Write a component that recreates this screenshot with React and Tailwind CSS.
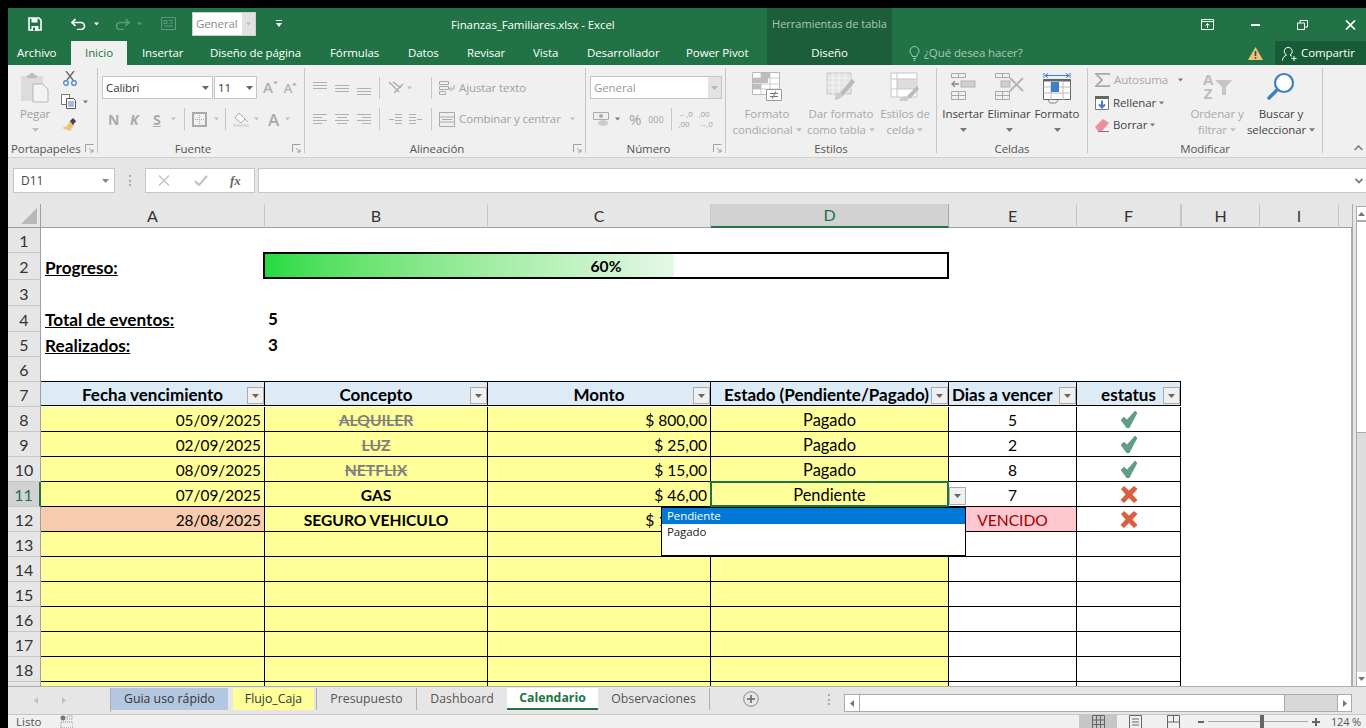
import React from "react";

const UI = "font-['Open_Sans','Noto_Sans',sans-serif]";
const SHEET = "font-['Lato','Liberation_Sans',sans-serif]";

// triangulito de los desplegables
const Caret = ({ className = "text-[#9a9a9a]", w = 7 }) => (
  <svg width={w} height="4" viewBox="0 0 7 4" className={`shrink-0 ${className}`}>
    <path d="M0 0h7L3.5 4z" fill="currentColor" />
  </svg>
);

const Sep = ({ className = "" }) => <div className={`w-px h-[22px] bg-[#c6c6c6] shrink-0 ${className}`} />;

const Lines = ({ rows, w = 14 }) => (
  <svg width={w} height="14" viewBox="0 0 14 14" className="shrink-0 text-[#b0b0b0]">
    {rows.map((r, i) => (
      <rect key={i} x={r[0]} y={r[1]} width={r[2]} height="1" fill="currentColor" />
    ))}
  </svg>
);

const GridBig = ({ children, w = 30, h = 30, view = "0 0 30 30" }) => (
  <svg width={w} height={h} viewBox={view} className="shrink-0">
    {children}
  </svg>
);

function BigButton({ icon, l1, l2, caret, w, disabled = true, caretBelow }) {
  const color = disabled ? "text-[#a8a8a8]" : "text-[#444]";
  return (
    <div className={`flex flex-col items-center shrink-0 ${w}`}>
      <div className="h-[34px] flex items-start justify-center">{icon}</div>
      <div className={`leading-[16px] whitespace-nowrap ${color}`}>{l1}</div>
      {caretBelow ? (
        <div className="h-[16px] flex items-center"><Caret className="text-[#777]" /></div>
      ) : (
        <div className={`flex items-center gap-[3px] leading-[16px] whitespace-nowrap ${color}`}>
          {l2}
          {caret && <Caret className={disabled ? "text-[#c0c0c0]" : "text-[#777]"} w={6} />}
        </div>
      )}
    </div>
  );
}

function Launcher() {
  return (
    <svg width="9" height="9" viewBox="0 0 9 9" className="absolute right-[4px] bottom-[4px] text-[#a0a0a0]">
      <path d="M0.5 8V0.5H8.5M4 4l4 4M8 5v3H5" fill="none" stroke="currentColor" />
    </svg>
  );
}

function Group({ label, w, launcher, children, labelClass = "justify-center" }) {
  return (
    <div className={`relative flex flex-col shrink-0 h-full ${w}`}>
      <div className="flex-1 min-h-0 border-r border-[#c6c6c6] mt-[3px] mb-[4px] flex flex-col">
        <div className="flex-1 min-h-0">{children}</div>
        <div className={`h-[18px] -mb-[4px] pt-[1px] flex items-center text-[#555] ${labelClass}`}>{label}</div>
      </div>
      {launcher && <Launcher />}
    </div>
  );
}

const SelectBox = ({ text, w, muted, arrowBg }) => (
  <div className={`h-[23px] ${w} bg-white border border-[#c6c6c6] flex items-center pl-[3px] ${muted ? "text-[#9a9a9a]" : "text-[#333]"}`}>
    <span className="flex-1">{text}</span>
    <span className={`w-[13px] h-full flex items-center justify-center ${arrowBg ? "bg-[#e3e3e3]" : ""}`}>
      <Caret className={muted ? "text-[#b5b5b5]" : "text-[#666]"} />
    </span>
  </div>
);

function QuickAccess() {
  return (
    <div className="h-[33px] pb-[2px] flex items-center">
      <svg width="14" height="14" viewBox="0 0 14 14" className="ml-[20px] shrink-0">
        <path d="M1 1h10l2 2v10H1z" fill="none" stroke="#fff" strokeWidth="1.6" />
        <path d="M3.5 1.5h6v4h-6zM3.5 9h7v4.5h-7z" fill="#fff" />
        <rect x="5" y="10.5" width="2" height="3" fill="#217346" />
      </svg>
      <svg width="16" height="12" viewBox="0 0 16 12" className="ml-[29px] shrink-0">
        <path d="M1 4.500h9a3.500 3.500 0 0 1 0 7H6M4.500 1L1 4.500 4.500 8" fill="none" stroke="#fff" strokeWidth="1.700" />
      </svg>
      <Caret className="text-white ml-[7px]" w={5} />
      <svg width="15" height="12" viewBox="0 0 15 12" className="ml-[16px] shrink-0">
        <path d="M14 4.500H5a3.500 3.500 0 0 0 0 7h4M10.500 1L14 4.500 10.500 8" fill="none" stroke="#5c9a78" strokeWidth="1.700" />
      </svg>
      <Caret className="text-[#5c9a78] ml-[7px]" w={5} />
      <svg width="15" height="13" viewBox="0 0 15 13" className="ml-[19px] shrink-0">
        <path d="M.5.5h14v12H.5zM3 3.500h3v3H3zM8 3.500h4M8 6h4M3 9h9" fill="none" stroke="#5c9a78" />
      </svg>
      <div className="ml-[16px] w-[64px] h-[24px] bg-white border border-[#c5d5cb] flex items-center text-[#8a8a8a] shrink-0">
        <span className="flex-1 pl-[3px]">General</span>
        <span className="w-[13px] h-full bg-[#e2e2e2] flex items-center justify-center"><Caret className="text-[#bbb]" w={5} /></span>
      </div>
      <svg width="6" height="7" viewBox="0 0 6 7" className="ml-[20px] shrink-0">
        <path d="M0 0h6v1H0zM0 3h6L3 7z" fill="#fff" />
      </svg>
    </div>
  );
}

const TABS = [
  ["Insertar", "w-[39px] ml-[15px]"],
  ["Diseño de página", "w-[91px] ml-[29px]"],
  ["Fórmulas", "w-[49px] ml-[29px]"],
  ["Datos", "w-[30px] ml-[29px]"],
  ["Revisar", "w-[37px] ml-[29px]"],
  ["Vista", "w-[25px] ml-[29px]"],
  ["Desarrollador", "w-[70px] ml-[29px]"],
  ["Power Pivot", "w-[63px] ml-[29px]"],
];

function TitleBar() {
  return (
    <div className={`h-[57px] bg-[#217346] flex text-white text-[11.5px] tracking-[-0.1px] shrink-0 ${UI}`}>
      <div className="w-[759px] shrink-0 flex flex-col">
        <div className="relative">
          <QuickAccess />
          <div className="absolute left-[443px] top-[9px] text-white leading-[16px]">Finanzas_Familiares.xlsx - Excel</div>
        </div>
        <div className="h-[24px] flex items-end">
          <div className="ml-[9px] w-[54px] shrink-0 h-full flex items-center">Archivo</div>
          <div className="w-[56px] shrink-0 h-full bg-[#f0f0f0] text-[#217346] flex items-center justify-center">Inicio</div>
          {TABS.map(([t, m]) => (
            <div key={t} className={`h-full shrink-0 flex items-center whitespace-nowrap ${m}`}>{t}</div>
          ))}
        </div>
      </div>
      <div className="w-[125px] shrink-0 bg-[#1c5e39] flex flex-col items-center">
        <div className="h-[33px] flex items-center text-[11px] tracking-normal text-[#a7c9b5] whitespace-nowrap">Herramientas de tabla</div>
        <div className="h-[24px] flex items-center">Diseño</div>
      </div>
      <div className="w-[474px] shrink-0 flex flex-col">
        <div className="h-[33px] flex items-center justify-end">
          <svg width="13" height="11" viewBox="0 0 13 11" className="mr-[37px]">
            <path d="M.5.5h12v10H.5zM.5 2.500h12M6.500 9V4.500M4.500 6.500l2-2 2 2" fill="none" stroke="#fff" />
          </svg>
          <div className="w-[9px] h-[2px] bg-white mr-[37px]" />
          <svg width="11" height="10" viewBox="0 0 11 10" className="mr-[37px]">
            <path d="M.5 3h7v6.500h-7zM3 3V.5h7.500V7H8" fill="none" stroke="#fff" strokeWidth="1" />
          </svg>
          <svg width="11" height="10" viewBox="0 0 11 10" className="mr-[10px]">
            <path d="M1 .5l9 9M10 .5l-9 9" stroke="#fff" strokeWidth="1.700" />
          </svg>
        </div>
        <div className="h-[24px] flex items-center">
          <svg width="11" height="15" viewBox="0 0 11 15" className="ml-[17px] shrink-0">
            <path d="M3.500 10.500C3 8 1 7.500 1 5a4.500 4.500 0 0 1 9 0c0 2.500-2 3-2.500 5.500zM4 12.500h3M4.500 14.300h2" fill="none" stroke="#a7c9b5" />
          </svg>
          <span className="ml-[4px] w-[97px] shrink-0 text-[#a7c9b5] whitespace-nowrap">¿Qué desea hacer?</span>
          <svg width="15" height="13" viewBox="0 0 15 13" className="ml-[227px] shrink-0">
            <path d="M7.500 0L15 13H0z" fill="#eec17b" />
            <rect x="6.700" y="4" width="1.600" height="5" fill="#444" />
            <rect x="6.700" y="10" width="1.600" height="1.600" fill="#444" />
          </svg>
          <div className="ml-[12px] flex-1 h-full bg-[#185c37] flex items-center pl-[7px]">
            <svg width="15" height="15" viewBox="0 0 15 15" className="shrink-0">
              <path d="M.5 14.500c0-3 2-4.500 4-5.500a4 4 0 1 1 3.500 0c1 .5 1.500 1 2 1.500M9.500 12.500h5M12 10v5" fill="none" stroke="#fff" />
            </svg>
            <span className="ml-[4px]">Compartir</span>
          </div>
        </div>
      </div>
    </div>
  );
}

function Clipboard() {
  return (
    <div className="flex pt-[3px]">
      <div className="w-[50px] ml-[2px] flex flex-col items-center">
        <svg width="30" height="31" viewBox="0 0 30 31" className="mt-[1px]">
          <path d="M1 4h22v25H1z" fill="#dcdcdc" />
          <path d="M7 3h3V1h4v2h3v3H7z" fill="#bdbdbd" />
          <path d="M13 12h10l5 5v13H13z" fill="#f3f3f3" stroke="#b5b5b5" />
        </svg>
        <span className="leading-[16px] text-[#a0a0a0] mt-[3px]">Pegar</span>
        <Caret className="text-[#c0c0c0] mt-[6px]" />
      </div>
      <div className="flex flex-col ml-[1px]">
        <svg width="16" height="15" viewBox="0 0 16 15" className="ml-[1px]">
          <path d="M4 0l7 9M12 0L5 9" stroke="#666" strokeWidth="1.300" />
          <circle cx="4" cy="12" r="2.300" fill="none" stroke="#3f7fc4" strokeWidth="1.200" />
          <circle cx="12" cy="12" r="2.300" fill="none" stroke="#3f7fc4" strokeWidth="1.200" />
        </svg>
        <div className="flex items-center mt-[8px]">
          <svg width="16" height="15" viewBox="0 0 16 15">
            <path d="M.5.5h8v10h-8z" fill="#fff" stroke="#777" />
            <path d="M5.500 4.500h7l2 2v8h-9z" fill="#fff" stroke="#555" />
            <path d="M7 8h6M7 10h6M7 12h6" stroke="#3f7fc4" />
          </svg>
          <Caret className="text-[#777] ml-[6px]" w={5} />
        </div>
        <svg width="16" height="15" viewBox="0 0 16 15" className="mt-[8px]">
          <path d="M9 4l4 4-4 6-8-3 5-2z" fill="#f1c279" />
          <path d="M9 4l3-3 3 3-3 4z" fill="#444" />
        </svg>
      </div>
    </div>
  );
}

function FontGroup() {
  return (
    <div className="flex flex-col pl-[4px] pt-[8px]">
      <div className="flex items-center">
        <SelectBox text="Calibri" w="w-[111px]" />
        <SelectBox text="11" w="w-[43px] ml-px" />
        <span className="ml-[6px] flex items-start text-[15px] leading-none text-[#b0b0b0] font-semibold">A<Caret className="text-[#b0b0b0] mt-[1px]" w={5} /></span>
        <span className="ml-[6px] flex items-start text-[13px] leading-none text-[#b0b0b0] font-semibold mt-[2px]">A<Caret className="text-[#b0b0b0] rotate-180" w={5} /></span>
      </div>
      <div className="flex items-center mt-[9px] h-[22px] text-[#aaa] text-[14px]">
        <span className="ml-[6px] w-[22px] font-bold">N</span>
        <span className="w-[23px] font-bold italic">K</span>
        <span className="w-[18px] font-bold underline">S</span>
        <Caret className="text-[#c0c0c0]" w={5} />
        <Sep className="ml-[8px]" />
        <svg width="15" height="15" viewBox="0 0 15 15" className="ml-[7px]">
          <path d="M1 1h13v13H1z" fill="none" stroke="#aaa" strokeWidth="2" />
          <path d="M7.500 3v9M3 7.500h9" stroke="#aaa" strokeDasharray="1 1" />
        </svg>
        <Caret className="text-[#c0c0c0] ml-[7px]" w={5} />
        <Sep className="ml-[6px]" />
        <svg width="17" height="15" viewBox="0 0 17 15" className="ml-[7px]">
          <path d="M6 1l6 6-4 4-6-5z" fill="#fff" stroke="#aaa" />
          <path d="M12 7l3 3" stroke="#aaa" />
          <rect x="0" y="12" width="16" height="3" fill="#ddd" />
        </svg>
        <Caret className="text-[#c0c0c0] ml-[4px]" w={5} />
        <span className="ml-[9px] text-[17px] leading-none font-semibold text-[#aaa]">A</span>
        <Caret className="text-[#c0c0c0] ml-[6px]" w={5} />
      </div>
    </div>
  );
}

const ALIGN = {
  top: [[0, 1, 14], [0, 4, 14], [0, 7, 14]],
  mid: [[0, 4, 14], [0, 7, 14], [0, 10, 14]],
  bot: [[0, 7, 14], [0, 10, 14], [0, 13, 14]],
  left: [[0, 2, 14], [0, 5, 9], [0, 8, 14], [0, 11, 9]],
  center: [[0, 2, 14], [2, 5, 10], [0, 8, 14], [2, 11, 10]],
  right: [[0, 2, 14], [5, 5, 9], [0, 8, 14], [5, 11, 9]],
};

function AlignGroup() {
  return (
    <div className="flex flex-col pl-[8px] pt-[8px] text-[#a0a0a0]">
      <div className="flex items-center h-[23px]">
        <Lines rows={ALIGN.top} />
        <div className="ml-[8px]"><Lines rows={ALIGN.mid} /></div>
        <div className="ml-[8px]"><Lines rows={ALIGN.bot} /></div>
        <Sep className="ml-[8px]" />
        <svg width="18" height="16" viewBox="0 0 18 16" className="ml-[7px]">
          <path d="M2 2l10 10M6 2l8 6M16 4l-9 9" fill="none" stroke="#aaa" strokeWidth="1.300" />
        </svg>
        <Caret className="text-[#c0c0c0] ml-[2px]" w={5} />
        <Sep className="ml-[19px]" />
        <svg width="16" height="14" viewBox="0 0 16 14" className="ml-[7px]">
          <path d="M.5.5h9v3h-9zM.5 5.500h9v3h-9zM.5 10.500h6v3h-6zM15 4v4h-4M12.500 6l-2 2 2 2" fill="none" stroke="#aaa" />
        </svg>
        <span className="ml-[4px] whitespace-nowrap">Ajustar texto</span>
      </div>
      <div className="flex items-center h-[22px] mt-[9px]">
        <Lines rows={ALIGN.left} />
        <div className="ml-[8px]"><Lines rows={ALIGN.center} /></div>
        <div className="ml-[8px]"><Lines rows={ALIGN.right} /></div>
        <Sep className="ml-[8px]" />
        <div className="ml-[7px]"><Lines rows={[[7, 2, 7], [7, 5, 7], [7, 8, 7], [7, 11, 7], [1, 7, 5]]} w={16} /></div>
        <div className="ml-[5px]"><Lines rows={[[0, 2, 7], [0, 5, 7], [0, 8, 7], [0, 11, 7], [8, 7, 5]]} w={16} /></div>
        <Sep className="ml-[7px]" />
        <svg width="16" height="15" viewBox="0 0 16 15" className="ml-[7px]">
          <path d="M.5.5h15v14H.5zM.5 5h15M.5 10h15M3 7.500h10" fill="none" stroke="#aaa" />
        </svg>
        <span className="ml-[4px] w-[102px] shrink-0 whitespace-nowrap">Combinar y centrar</span>
        <Caret className="text-[#c0c0c0] ml-[9px]" w={5} />
      </div>
    </div>
  );
}

function NumberGroup() {
  return (
    <div className="flex flex-col pl-[4px] pt-[8px] text-[#a0a0a0]">
      <SelectBox text="General" w="w-[132px]" muted arrowBg />
      <div className="flex items-center h-[22px] mt-[9px]">
        <svg width="17" height="15" viewBox="0 0 17 15" className="ml-[3px]">
          <path d="M.5.5h15v7H.5z" fill="none" stroke="#aaa" />
          <circle cx="8" cy="4" r="2" fill="#aaa" />
          <ellipse cx="10" cy="11" rx="5" ry="3" fill="#ccc" />
        </svg>
        <Caret className="text-[#777] ml-[5px]" w={5} />
        <span className="ml-[9px] text-[15px] leading-none">%</span>
        <span className="ml-[7px] text-[9px] leading-none">000</span>
        <Sep className="ml-[8px]" />
        <span className="ml-[6px] text-[8px] leading-[10px] w-[15px] whitespace-nowrap">←,0<br />,00</span>
        <span className="ml-[5px] text-[8px] leading-[10px] w-[15px] whitespace-nowrap">,00<br />→,0</span>
      </div>
    </div>
  );
}

const IconFormatoCond = (
  <GridBig>
    <path d="M.5.5h27v22H.5z" fill="#fff" stroke="#b8b8b8" />
    <path d="M9 .5v22M18 .5v22M.5 6h27M.5 12h27M.5 17h27" stroke="#ccc" />
    <path d="M9 1h9v5H9zM1 6h15v5H1zM1 12h8v5H1z" fill="#bdbdbd" />
    <path d="M14.500 17.500h15v11h-15z" fill="#fff" stroke="#999" />
    <path d="M18 21.500h8M18 24.500h8M24 19l-4 8" stroke="#777" />
  </GridBig>
);

const IconTabla = (
  <GridBig>
    <path d="M1 1h24v21H1z" fill="#e4e4e4" stroke="#c6c6c6" />
    <path d="M7 1v21M13 1v21M19 1v21M1 6h24M1 11h24M1 16h24" stroke="#f4f4f4" />
    <path d="M26 7L13 22l3 3L29 10z" fill="#bbb" />
    <path d="M9 23c2-3 6-3 7-1s-1 6-8 6c2-1 1-3 1-5z" fill="#ccc" />
  </GridBig>
);

const IconEstilos = (
  <GridBig>
    <path d="M1 1h26v24H1z" fill="#fff" stroke="#c6c6c6" />
    <path d="M7 7h20v10H7z" fill="#ddd" />
    <path d="M1 7h26M1 17h26M7 1v24" stroke="#c6c6c6" />
    <path d="M27 14L17 24l3 3 9-10z" fill="#bbb" />
    <path d="M9 29c1-4 8-6 10-3l-2 3z" fill="#ccc" />
  </GridBig>
);

const IconInsertar = (
  <GridBig w={26} h={28} view="0 0 26 28">
    <path d="M1.500 1.500h14v4h-14zM1.500 5.500h14M8.500 1.500v4M1.500 19.500h14v8h-14zM1.500 23.500h14M8.500 19.500v8" fill="none" stroke="#aaa" />
    <rect x="11" y="9" width="14" height="6" fill="#d0d0d0" stroke="#b5b5b5" />
    <path d="M9 12H2M5 9l-3 3 3 3" fill="none" stroke="#888" strokeWidth="1.300" />
  </GridBig>
);

const IconEliminar = (
  <GridBig w={30} h={28} view="0 0 30 28">
    <path d="M1.500 1.500h14v4h-14zM1.500 5.500h14M8.500 1.500v4M1.500 19.500h14v8h-14zM1.500 23.500h14M8.500 19.500v8" fill="none" stroke="#aaa" />
    <rect x="7" y="9" width="9" height="6" fill="#d0d0d0" stroke="#b5b5b5" />
    <path d="M16 6l13 13M29 6L16 19" stroke="#b5b5b5" strokeWidth="2" />
  </GridBig>
);

const IconFormato = (
  <GridBig w={30} h={32} view="0 0 30 32">
    <path d="M2 1v5M28 1v5M3 3.500h24M6 1.500L3 3.500l3 2M24 1.500l3 2-3 2" fill="none" stroke="#3f7fc4" />
    <path d="M1.500 7.500h27v20h-27z" fill="#fff" stroke="#666" />
    <path d="M1.500 7.500h27v2h-27z" fill="#666" />
    <path d="M9 9v19M21 9v19M1.500 15h27M1.500 21h27" stroke="#bbb" />
    <rect x="9" y="10" width="8" height="10" fill="#3f7fc4" />
    <path d="M6 28l2 3h6l2-3" fill="none" stroke="#888" />
  </GridBig>
);

// el icono de ordenar lleva letras de verdad, no trazos
const IconOrdenar = (
  <div className="flex items-start w-[30px] h-[28px]">
    <div className="w-[12px] flex flex-col items-center text-[15px] leading-[14px] font-bold text-[#bdbdbd]">
      <span>A</span>
      <span>Z</span>
    </div>
    <svg width="17" height="16" viewBox="0 0 17 16" className="mt-[8px] ml-[1px] shrink-0">
      <path d="M0 0h17l-6 7v8H7V7z" fill="#c6c6c6" />
    </svg>
  </div>
);

function EditGroup() {
  return (
    <div className="flex pt-[4px] pl-[7px]">
      <div className="w-[87px] flex flex-col shrink-0">
        <div className="flex items-center h-[16px] text-[#a8a8a8]">
          <svg width="15" height="14" viewBox="0 0 15 14" className="shrink-0">
            <path d="M15 2.500V.8H1L7 7l-6 6.200h14v-1.700" fill="none" stroke="#aaa" strokeWidth="1.800" />
          </svg>
          <span className="ml-[4px] w-[55px] shrink-0">Autosuma</span>
          <Caret className="text-[#777] ml-[9px]" w={5} />
        </div>
        <div className="flex items-center h-[16px] mt-[7px] text-[#444]">
          <svg width="14" height="14" viewBox="0 0 14 14" className="shrink-0">
            <path d="M.5.5h13v13H.5z" fill="#fff" stroke="#777" />
            <rect x="0" y="0" width="14" height="3" fill="#666" />
            <path d="M7 4.500v7M4 8.500l3 3 3-3" fill="none" stroke="#3f7fc4" strokeWidth="2" />
          </svg>
          <span className="ml-[4px]">Rellenar</span>
          <Caret className="text-[#777] ml-[3px]" w={5} />
        </div>
        <div className="flex items-center h-[16px] mt-[6px] text-[#444]">
          <svg width="15" height="14" viewBox="0 0 15 14" className="shrink-0">
            <path d="M0 9l8-8 6 4-7 8H3z" fill="#ee8d9b" />
            <path d="M3 13.500h11" stroke="#777" />
          </svg>
          <span className="ml-[3px]">Borrar</span>
          <Caret className="text-[#777] ml-[3px]" w={5} />
        </div>
      </div>
      <BigButton w="w-[70px]" l1="Ordenar y" l2="filtrar" caret icon={IconOrdenar} />
      <BigButton
        w="w-[58px]"
        l1="Buscar y"
        l2="seleccionar"
        caret
        disabled={false}
        icon={
          <GridBig w={28} h={30} view="0 0 28 30">
            <circle cx="17" cy="11" r="9" fill="#fff" stroke="#3f7fc4" strokeWidth="2.200" />
            <path d="M10 18l-8 8" stroke="#3f7fc4" strokeWidth="3.500" strokeLinecap="round" />
          </GridBig>
        }
      />
    </div>
  );
}

function Ribbon() {
  return (
    <div className={`h-[93px] bg-[#f0f0f0] border-b border-[#d0d0d0] flex shrink-0 relative text-[11.5px] tracking-[-0.1px] ${UI}`}>
      <Group label="Portapapeles" w="w-[90px]" launcher labelClass="justify-start pl-[3px]"><Clipboard /></Group>
      <Group label="Fuente" w="w-[207px]" launcher labelClass="justify-center pr-[16px]"><FontGroup /></Group>
      <Group label="Alineación" w="w-[281px]" launcher labelClass="justify-center pr-[16px]"><AlignGroup /></Group>
      <Group label="Número" w="w-[140px]" launcher labelClass="justify-center pr-[14px]"><NumberGroup /></Group>
      <Group label="Estilos" w="w-[211px]">
        <div className="flex pt-[4px] pl-[6px]">
          <BigButton w="w-[70px]" l1="Formato" l2="condicional" caret icon={IconFormatoCond} />
          <BigButton w="w-[78px]" l1="Dar formato" l2="como tabla" caret icon={IconTabla} />
          <BigButton w="w-[50px]" l1="Estilos de" l2="celda" caret icon={IconEstilos} />
        </div>
      </Group>
      <Group label="Celdas" w="w-[151px]">
        <div className="flex pt-[4px] pl-[3px]">
          <BigButton w="w-[46px]" l1="Insertar" caretBelow disabled={false} icon={IconInsertar} />
          <BigButton w="w-[46px]" l1="Eliminar" caretBelow disabled={false} icon={IconEliminar} />
          <BigButton w="w-[50px]" l1="Formato" caretBelow disabled={false} icon={IconFormato} />
        </div>
      </Group>
      <Group label="Modificar" w="w-[235px]"><EditGroup /></Group>
      <svg width="9" height="6" viewBox="0 0 9 6" className="absolute right-[3px] bottom-[6px]">
        <path d="M.5 5l4-4 4 4" fill="none" stroke="#777" strokeWidth="1.500" />
      </svg>
    </div>
  );
}

function FormulaBar() {
  return (
    <div className={`h-[46px] bg-[#e6e6e6] flex items-start pt-[10px] shrink-0 ${UI}`}>
      <div className="ml-[5px] w-[102px] h-[25px] bg-white border border-[#c6c6c6] flex items-center pl-[7px] pr-[5px] text-[12px] text-[#444]">
        <span className="flex-1">D11</span>
        <Caret className="text-[#888]" />
      </div>
      <div className="w-[30px] h-[25px] flex items-center justify-center">
        <div className="w-[2px] h-[11px] border-l-2 border-dotted border-[#aaa]" />
      </div>
      <div className="w-[110px] h-[25px] bg-white border border-[#c6c6c6] flex items-center text-[#b5b5b5]">
        <svg width="12" height="11" viewBox="0 0 12 11" className="ml-[12px]">
          <path d="M1 .5l10 10M11 .5l-10 10" stroke="#c0c0c0" strokeWidth="1.300" />
        </svg>
        <svg width="14" height="11" viewBox="0 0 14 11" className="ml-[24px]">
          <path d="M1 6l4 4 8-9" fill="none" stroke="#c0c0c0" strokeWidth="2" />
        </svg>
        <span className="ml-[22px] font-['Liberation_Serif',serif] italic font-bold text-[13px] text-[#666]">fx</span>
      </div>
      <div className="ml-[3px] flex-1 h-[25px] bg-white border border-[#c6c6c6] border-r-0 flex items-center justify-end pr-[3px]">
        <svg width="8" height="6" viewBox="0 0 8 6">
          <path d="M.5.8L4 4.500 7.500.8" fill="none" stroke="#777" strokeWidth="1.800" />
        </svg>
      </div>
    </div>
  );
}

const COLS = [
  ["A", "w-[224px]"],
  ["B", "w-[223px]"],
  ["C", "w-[223px]"],
  ["D", "w-[238px]"],
  ["E", "w-[128px]"],
  ["F", "w-[104px]"],
];
const W = Object.fromEntries(COLS);

function ColumnHeaders() {
  return (
    <div className={`h-[24px] bg-[#e6e6e6] flex shrink-0 text-[16px] text-[#333] ${SHEET}`}>
      <div className="w-[33px] border-r border-b border-[#9f9f9f] relative">
        <svg width="16" height="16" viewBox="0 0 16 16" className="absolute right-[3px] bottom-[3px]">
          <path d="M16 0v16H0z" fill="#b9b9b9" />
        </svg>
      </div>
      {COLS.map(([c, w]) => (
        <div
          key={c}
          className={`${w} flex items-center justify-center border-b border-r ${
            c === "D" ? "bg-[#d2d2d2] text-[#217346] border-b-[#217346] border-b-2 border-r-[#ababab]" : "border-b-[#9f9f9f] border-r-[#c6c6c6]"
          }`}
        >
          {c}
        </div>
      ))}
      <div className="w-[1px] border-r border-b border-b-[#9f9f9f] border-r-[#c6c6c6]" />
      <div className="w-[78px] flex items-center justify-center border-b border-r border-b-[#9f9f9f] border-r-[#c6c6c6]">H</div>
      <div className="w-[79px] flex items-center justify-center border-b border-r border-b-[#9f9f9f] border-r-[#c6c6c6]">I</div>
      <div className="w-[14px] border-b border-r border-b-[#9f9f9f] border-r-[#ababab]" />
      <div className="ml-[3px] mt-[2px] flex-1 bg-white border-l border-t border-[#ababab]">
        <div className="h-[15px] border-b-2 border-[#ababab] flex items-center justify-center">
          <Caret className="text-[#777] rotate-180" />
        </div>
      </div>
    </div>
  );
}

const FilterBtn = () => (
  <div className="absolute right-0 bottom-[1px] w-[17px] h-[17px] bg-[#f0f0f0] border border-[#ababab] flex items-center justify-center">
    <Caret className="text-[#666]" />
  </div>
);

const Check = () => (
  <svg width="18" height="17" viewBox="0 0 18 17" className="-mt-[2px]">
    <path d="M1 9l3-3 3 3 8-9 2 2-8 15H7z" fill="#5f9e87" stroke="#437a65" strokeWidth=".5" />
  </svg>
);

const Cross = () => (
  <svg width="18" height="17" viewBox="0 0 18 17" className="-mt-[2px]">
    <path d="M1 3l3-3 5 4.500L14 0l3.500 3-5 5.500 5 5.500-3.500 3-5-5-5 5-3.500-3 5-5.500z" fill="#d95f3f" />
  </svg>
);

function Cell({ col, bg = "", className = "", children, top }) {
  return (
    <div className={`${W[col]} relative h-full flex items-center pt-[3px] border-r border-b border-black min-w-0 ${top ? "border-t -mt-px h-[calc(100%+1px)]" : ""} ${bg} ${className}`}>
      {children}
    </div>
  );
}

const YEL = "bg-[#ffff99]";

function HeaderCell({ col, children, className = "justify-center" }) {
  return (
    <Cell col={col} top bg="bg-[#ddebf7]" className={`font-bold text-[17px] overflow-hidden whitespace-nowrap ${className}`}>
      {children}
      <FilterBtn />
    </Cell>
  );
}

const RowLabel = ({ n, active }) => (
  <div className={`w-[33px] shrink-0 h-full flex items-center justify-center pt-[2px] text-[16px] border-b border-b-[#c6c6c6] ${
    active ? "bg-[#d2d2d2] text-[#217346] border-r-2 border-r-[#217346]" : "bg-[#e6e6e6] text-[#333] border-r border-r-[#9f9f9f]"
  }`}>
    {n}
  </div>
);

const DATA = [
  { n: 8, fecha: "05/09/2025", concepto: "ALQUILER", done: true, monto: "$ 800,00", estado: "Pagado", dias: "5", ok: true },
  { n: 9, fecha: "02/09/2025", concepto: "LUZ", done: true, monto: "$ 25,00", estado: "Pagado", dias: "2", ok: true },
  { n: 10, fecha: "08/09/2025", concepto: "NETFLIX", done: true, monto: "$ 15,00", estado: "Pagado", dias: "8", ok: true },
  { n: 11, fecha: "07/09/2025", concepto: "GAS", monto: "$ 46,00", estado: "Pendiente", dias: "7", active: true },
  { n: 12, fecha: "28/08/2025", concepto: "SEGURO VEHICULO", monto: "$ 120,00", estado: "Pendiente", vencido: true },
];

function ValidationList() {
  return (
    <>
      <div className="absolute inset-[-1px] border-2 border-[#217346] pointer-events-none" />
      <div className="absolute left-full top-[5px] ml-px w-[17px] h-[18px] bg-[#f0f0f0] border border-[#ababab] flex items-center justify-center z-10">
        <Caret className="text-[#666]" />
      </div>
      <div className={`absolute right-[-18px] top-[25px] w-[305px] h-[50px] bg-white border border-black border-b-2 z-10 text-[11.5px] tracking-[-0.1px] leading-[16px] text-[#222] font-normal ${UI}`}>
        <div className="bg-[#0078d7] text-white pl-[5px] h-[16px]">Pendiente</div>
        <div className="pl-[5px]">Pagado</div>
      </div>
    </>
  );
}

function DataRow({ r }) {
  return (
    <div className="flex h-[25px]">
      <RowLabel n={r.n} active={r.active} />
      <Cell col="A" bg={r.vencido ? "bg-[#f8cbad]" : YEL} className="justify-end pr-[3px] text-[15.4px]">{r.fecha}</Cell>
      <Cell col="B" bg={YEL} className={`justify-center font-bold ${r.done ? "line-through text-[#808080]" : ""}`}>{r.concepto}</Cell>
      <Cell col="C" bg={YEL} className="justify-end pr-[3px]">{r.monto}</Cell>
      <Cell col="D" bg={YEL} className="justify-center text-[16.4px]">
        {r.active ? (
          <>
            {r.estado}
            <ValidationList />
          </>
        ) : (
          r.estado
        )}
      </Cell>
      <Cell col="E" bg={r.vencido ? "bg-[#ffc7ce] text-[#9c0006]" : ""} className="justify-center">{r.vencido ? "VENCIDO" : r.dias}</Cell>
      <Cell col="F" className="justify-center">{r.ok ? <Check /> : <Cross />}</Cell>
    </div>
  );
}

function EmptyRow({ n }) {
  return (
    <div className="flex h-[25px]">
      <RowLabel n={n} />
      <Cell col="A" bg={YEL} />
      <Cell col="B" bg={YEL} />
      <Cell col="C" bg={YEL} />
      <Cell col="D" bg={YEL} />
      <Cell col="E" />
      <Cell col="F" />
    </div>
  );
}

function Sheet() {
  const label = "pl-[4px] pt-[2px] font-bold underline text-[17.2px] w-[224px] shrink-0 flex items-center";
  return (
    <div className={`h-[458px] flex overflow-hidden shrink-0 bg-[#e6e6e6] text-[15.6px] text-black ${SHEET}`}>
      <div className="w-[1345px] shrink-0 bg-white border-r-2 border-[#ababab] overflow-hidden">
        <div className="flex h-[25px]"><RowLabel n={1} /></div>
        <div className="flex h-[27px]">
          <RowLabel n={2} />
          <div className={label}>Progreso:</div>
          <div className="relative -ml-[2px] w-[686px] h-full border-2 border-black font-bold flex items-center justify-center pt-[3px] -mt-px mb-px">
            <div className="absolute left-0 inset-y-0 w-[60%] bg-gradient-to-r from-[#20db40] to-[#e4f8e6]" />
            <span className="relative">60%</span>
          </div>
        </div>
        <div className="flex h-[26px]"><RowLabel n={3} /></div>
        <div className="flex h-[26px]">
          <RowLabel n={4} />
          <div className={label}>Total de eventos:</div>
          <div className="pl-[3px] font-bold text-[17px] flex items-center">5</div>
        </div>
        <div className="flex h-[25px]">
          <RowLabel n={5} />
          <div className={label}>Realizados:</div>
          <div className="pl-[3px] font-bold text-[17px] flex items-center">3</div>
        </div>
        <div className="flex h-[25px]"><RowLabel n={6} /></div>
        <div className="flex h-[25px]">
          <RowLabel n={7} />
          <HeaderCell col="A">Fecha vencimiento</HeaderCell>
          <HeaderCell col="B">Concepto</HeaderCell>
          <HeaderCell col="C">Monto</HeaderCell>
          <HeaderCell col="D" className="justify-start pl-[13px]">Estado (Pendiente/Pagado)</HeaderCell>
          <HeaderCell col="E" className="justify-start pl-[3px]">Dias a vencer</HeaderCell>
          <HeaderCell col="F">estatus</HeaderCell>
        </div>
        {DATA.map((r) => <DataRow key={r.n} r={r} />)}
        {[13, 14, 15, 16, 17, 18].map((n) => <EmptyRow key={n} n={n} />)}
        <EmptyRow n="" />
      </div>
      <div className="ml-[1px] flex-1 flex flex-col pl-[2px]">
        <div className="h-[205px] bg-white border-l border-b border-[#ababab]" />
        <div className="flex-1 bg-[#dcdcdc] border-l border-[#ababab]" />
        <div className="h-[14px] bg-white border-l border-[#ababab] flex items-center justify-center">
          <Caret className="text-[#777]" />
        </div>
      </div>
    </div>
  );
}

const SHEETS = [
  { t: "Guia uso rápido", w: "w-[117px]", c: "bg-[#b4c7e1] text-[#333]" },
  { t: "Flujo_Caja", w: "w-[81px] ml-[5px]", c: "bg-[#ffff99] text-[#333]" },
  { t: "Presupuesto", w: "w-[100px] ml-[2px] border-l border-[#b0b0b0]", c: "text-[#555]" },
  { t: "Dashboard", w: "w-[91px] border-l border-[#b0b0b0]", c: "text-[#555]" },
  { t: "Calendario", w: "w-[91px]", c: "bg-white text-[#217346] font-bold border-b-2 border-[#217346]" },
  { t: "Observaciones", w: "w-[112px] border-r border-[#b0b0b0]", c: "text-[#555]" },
];

function TabBar() {
  return (
    <div className={`h-[28px] bg-[#e6e6e6] border-t border-[#b0b0b0] flex items-start shrink-0 text-[12.3px] ${UI}`}>
      <div className="w-[103px] h-[24px] flex items-center border-r border-[#b0b0b0] mt-[1px] text-[#c0c0c0] pl-[26px]">
        <svg width="4" height="7" viewBox="0 0 4 7"><path d="M4 0v7L0 3.500z" fill="currentColor" /></svg>
        <svg width="4" height="7" viewBox="0 0 4 7" className="ml-[24px]"><path d="M0 0v7l4-3.500z" fill="currentColor" /></svg>
      </div>
      {SHEETS.map((s) => (
        <div key={s.t} className={`h-[22px] mt-[1px] flex items-center justify-center whitespace-nowrap ${s.w} ${s.c}`}>{s.t}</div>
      ))}
      <svg width="16" height="16" viewBox="0 0 16 16" className="ml-[33px] mt-[4px]">
        <circle cx="8" cy="8" r="7.300" fill="none" stroke="#888" />
        <path d="M8 4v8M4 8h8" stroke="#666" strokeWidth="1.500" />
      </svg>
      <div className="ml-[69px] mt-[7px] h-[11px] border-l-2 border-dotted border-[#aaa]" />
      <div className="ml-[14px] mt-[7px] w-[508px] h-[18px] flex border border-[#ababab] bg-[#d8d8d8]">
        <div className="w-[15px] bg-white border-r border-[#ababab] flex items-center justify-center">
          <svg width="4" height="7" viewBox="0 0 4 7"><path d="M4 0v7L0 3.500z" fill="#777" /></svg>
        </div>
        <div className="w-[425px] bg-white border-r border-[#ababab]" />
        <div className="flex-1" />
        <div className="w-[14px] bg-white border-l border-[#ababab] flex items-center justify-center">
          <svg width="4" height="7" viewBox="0 0 4 7"><path d="M0 0v7l4-3.500z" fill="#777" /></svg>
        </div>
      </div>
    </div>
  );
}

function StatusBar() {
  return (
    <div className={`h-[14px] bg-[#f0f0f0] flex items-start shrink-0 text-[11.5px] leading-[14px] text-[#555] overflow-hidden border-t border-[#c6c6c6] ${UI}`}>
      <span className="ml-[8px] w-[30px] shrink-0">Listo</span>
      <svg width="13" height="13" viewBox="0 0 13 13" className="ml-[14px] shrink-0">
        <circle cx="3" cy="3" r="2.500" fill="#777" />
        <path d="M7 1h6v3H7zM1 7h12v6H1z" fill="none" stroke="#888" strokeDasharray="1 1" />
      </svg>
      <div className="ml-[1006px] w-[38px] h-[14px] bg-[#c6c6c6] flex items-start justify-center shrink-0">
        <svg width="13" height="14" viewBox="0 0 13 14"><path d="M.5.5h12v13H.5zM.5 5h12M.5 9.500h12M4.500.5v13M8.500.5v13" fill="none" stroke="#666" /></svg>
      </div>
      <svg width="13" height="14" viewBox="0 0 13 14" className="ml-[12px] shrink-0"><path d="M.5.5h12v13H.5zM3 4h7M3 7h7M3 10h7" fill="none" stroke="#666" /></svg>
      <svg width="13" height="14" viewBox="0 0 13 14" className="ml-[25px] shrink-0"><path d="M.5 13V.5h12V13M.5 7h12M6.500.5V7" fill="none" stroke="#666" /></svg>
      <div className="ml-[18px] mt-[6px] w-[6px] h-[2px] bg-[#666] shrink-0" />
      <div className="relative ml-[4px] mt-[6px] w-[100px] h-px bg-[#aaa] shrink-0">
        <div className="absolute left-[52px] top-[-6px] w-[4px] h-[14px] bg-[#666]" />
      </div>
      <svg width="8" height="8" viewBox="0 0 8 8" className="ml-[4px] mt-[3px] shrink-0"><path d="M4 0v8M0 4h8" stroke="#666" strokeWidth="2" /></svg>
      <span className="ml-[11px] text-[11px] tracking-[-0.2px] whitespace-nowrap">124 %</span>
    </div>
  );
}

export default function App() {
  return (
    <div className="w-[1366px] h-[728px] bg-black pl-[8px] pt-[8px] overflow-hidden">
      <div className="w-[1358px] h-[720px] flex flex-col overflow-hidden">
        <TitleBar />
        <Ribbon />
        <FormulaBar />
        <ColumnHeaders />
        <Sheet />
        <TabBar />
        <StatusBar />
      </div>
    </div>
  );
}
